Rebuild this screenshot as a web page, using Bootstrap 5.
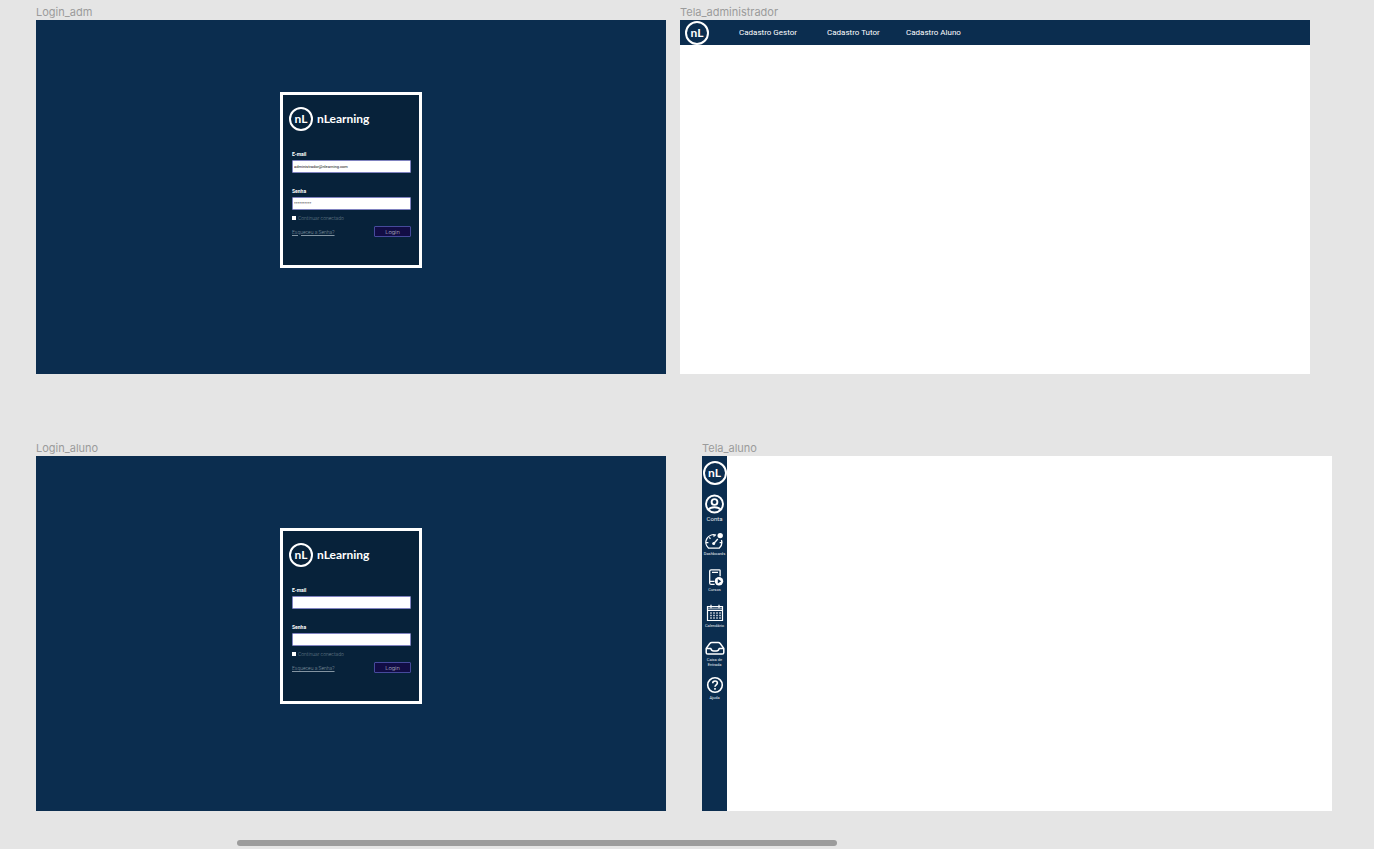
<!DOCTYPE html>
<html lang="pt-BR">
<head>
<meta charset="utf-8">
<meta name="viewport" content="width=device-width, initial-scale=1">
<title>nLearning</title>
<link href="https://cdn.jsdelivr.net/npm/bootstrap@5.3.0/dist/css/bootstrap.min.css" rel="stylesheet">
<style>
  :root { --navy: #0b2d4f; --navy-dark: #07223a; --indigo: #464a9c; }
  body { background: #e5e5e5; font-family: Roboto, "Liberation Sans", sans-serif; font-size: 5px; line-height: 6px; }
  .board-row-a { padding: 0 64px 0 36px; gap: 14px; }
  .board-row-b { padding: 62px 42px 0 36px; gap: 36px; }
  .artboard { flex: 1 1 0; min-width: 0; }
  .artboard-title { font: 400 11px/14px Inter, sans-serif; color: #9b9b9b; margin: 0; padding: 5px 0 1px; }
  .screen { aspect-ratio: 16 / 9; }
  .navy { background: var(--navy); }

  .login-screen { padding-top: 72px; }
  .login-box { width: 142px; min-height: 176px; background: var(--navy-dark); border: 3px solid #fff; padding: 12px 8px 0 9px; }
  .brand-row { margin: 0 0 20px -3px; gap: 4px; }
  .brand-name { font: 700 12px/16px Lato, sans-serif; color: #fff; }
  .ring { width: 24px; height: 24px; border: 2px solid #fff; border-radius: 50%; color: #fff; font: 700 12px/18px Lato, sans-serif; flex: none; }
  .field-name { font-weight: 700; color: #fff; margin-bottom: 3px; display: block; }
  .field { height: 13px; border: 1px solid #8083c0; border-radius: 1px; padding: 0 1px; font-size: 4px; line-height: 10px; color: #111; background: #fff; width: 100%; display: block; }
  .field-group { margin-bottom: 15px; }
  .field-group + .field-group { margin-bottom: 5px; }
  .keep { gap: 2px; color: #6d808f; font-weight: 300; margin-bottom: 5px; }
  .keep input { appearance: none; width: 4px; height: 4px; background: #fff; margin: 0; }
  .forgot { color: #8394a1; font-weight: 300; }
  .login-btn { width: 37px; height: 11px; border: 1px solid var(--indigo); border-radius: 1px; background: #120d45; color: #c3c3d2; font-size: 6px; font-weight: 300; line-height: 8px; padding: 0; }

  .topbar { height: 25px; padding-left: 5px; gap: 30px; }
  .topbar-links { display: grid; grid-template-columns: 88px 79px auto; font-size: 8px; line-height: 12px; }
  .sidebar { width: 25px; padding-top: 5px; flex: none; }
  .side-item { height: 36px; font-size: 4px; line-height: 5px; color: #e6ebf0; text-align: center; }
  .side-item svg { width: 18px; height: 18px; margin-bottom: 1px; flex: none; }
  .side-item.account { margin-top: 10px; height: 37px; font-size: 6px; line-height: 9px; }
  .side-item.account svg { width: 20px; }
  .side-item.inbox svg { width: 20px; height: 16px; }

  .scroll-track { padding: 0 537px 3px 237px; }
  .scroll-thumb { height: 6px; border-radius: 3px; background: #9c9c9c; }
</style>
</head>
<body>
<div class="d-flex flex-column min-vh-100">
  <main>
    <div class="board-row-a d-flex">
      <section class="artboard">
        <h2 class="artboard-title">Login_adm</h2>
        <div class="screen navy login-screen d-flex justify-content-center align-items-start">
          <form class="login-box">
            <div class="brand-row d-flex align-items-center">
              <span class="ring d-flex justify-content-center align-items-center">nL</span>
              <span class="brand-name">nLearning</span>
            </div>
            <div class="field-group">
              <label class="field-name" for="adm-email">E-mail</label>
              <input class="field" id="adm-email" type="text" value="administrador@nlearning.com">
            </div>
            <div class="field-group">
              <label class="field-name" for="adm-senha">Senha</label>
              <input class="field" id="adm-senha" type="text" value="**********">
            </div>
            <div class="keep d-flex align-items-center">
              <input type="checkbox" id="adm-keep"><label for="adm-keep">Continuar conectado</label>
            </div>
            <div class="d-flex justify-content-between align-items-center">
              <a class="forgot" href="#">Esqueceu a Senha?</a>
              <button class="login-btn" type="button">Login</button>
            </div>
          </form>
        </div>
      </section>

      <section class="artboard">
        <h2 class="artboard-title">Tela_administrador</h2>
        <div class="screen bg-white">
          <nav class="topbar navy d-flex align-items-center">
            <span class="ring d-flex justify-content-center align-items-center">nL</span>
            <div class="topbar-links">
              <a class="text-white text-decoration-none" href="#">Cadastro Gestor</a>
              <a class="text-white text-decoration-none" href="#">Cadastro Tutor</a>
              <a class="text-white text-decoration-none" href="#">Cadastro Aluno</a>
            </div>
          </nav>
        </div>
      </section>
    </div>

    <div class="board-row-b d-flex">
      <section class="artboard">
        <h2 class="artboard-title">Login_aluno</h2>
        <div class="screen navy login-screen d-flex justify-content-center align-items-start">
          <form class="login-box">
            <div class="brand-row d-flex align-items-center">
              <span class="ring d-flex justify-content-center align-items-center">nL</span>
              <span class="brand-name">nLearning</span>
            </div>
            <div class="field-group">
              <label class="field-name" for="alu-email">E-mail</label>
              <input class="field" id="alu-email" type="text">
            </div>
            <div class="field-group">
              <label class="field-name" for="alu-senha">Senha</label>
              <input class="field" id="alu-senha" type="password">
            </div>
            <div class="keep d-flex align-items-center">
              <input type="checkbox" id="alu-keep"><label for="alu-keep">Continuar conectado</label>
            </div>
            <div class="d-flex justify-content-between align-items-center">
              <a class="forgot" href="#">Esqueceu a Senha?</a>
              <button class="login-btn" type="button">Login</button>
            </div>
          </form>
        </div>
      </section>

      <section class="artboard">
        <h2 class="artboard-title">Tela_aluno</h2>
        <div class="screen bg-white d-flex">
          <nav class="sidebar navy d-flex flex-column align-items-center">
            <span class="ring d-flex justify-content-center align-items-center">nL</span>
            <a class="side-item account d-flex flex-column align-items-center text-decoration-none" href="#">
              <svg viewBox="-1 0 20 18" overflow="visible" fill="none" stroke="#fff" stroke-width="1.9"><circle cx="8.500" cy="9" r="8.500"/><circle cx="8.500" cy="7" r="2.900"/><path d="M2.700 14.600C4.600 11.400 12.400 11.400 14.300 14.600"/></svg>
              Conta</a>
            <a class="side-item d-flex flex-column align-items-center text-decoration-none" href="#">
              <svg viewBox="0 0 18 18" fill="none" stroke="#fff" stroke-width="1.3"><path d="M11 3.200A7.600 7.600 0 0 0 3.600 16.200H14.200A7.600 7.600 0 0 0 16.400 8M1.400 10.600h2M4.200 5.400l1.300 1.300M9 3v1.800M14.600 10.600h2"/><path d="M9 11.200l3.800-4.200"/><circle cx="8.700" cy="11.400" r="1.500" fill="#fff" stroke="none"/><circle cx="15.200" cy="3.600" r="2.700" fill="#fff" stroke="none"/></svg>
              Dashboards</a>
            <a class="side-item d-flex flex-column align-items-center text-decoration-none" href="#">
              <svg viewBox="0 0 18 18" fill="none" stroke="#fff" stroke-width="1.3"><path d="M8.600 16.400H5.200a1.500 1.500 0 0 1-1.500-1.500V3.200A1.400 1.400 0 0 1 5.100 1.800h8.200a.8.8 0 0 1 .8.800v5.600M6 4.300h6M4 13.400h4.400"/><circle cx="13" cy="13.200" r="4.200" fill="#fff" stroke="none"/><path d="M11.800 11l3.400 2.200-3.400 2.200z" fill="#0b2d4f" stroke="none"/></svg>
              Cursos</a>
            <a class="side-item d-flex flex-column align-items-center text-decoration-none" href="#">
              <svg viewBox="0 0 18 18" fill="none" stroke="#fff" stroke-width="1.2"><path d="M1.500 2.500h15v14h-15zM1.500 6.300h15M5 .8v3.400M13 .8v3.400"/><path d="M1.500 4.200h15" stroke-opacity=".6"/><path d="M5 8.300v6.600M8 8.300v6.600M11 8.300v6.600M14 8.300v6.600" stroke-width="1.300" stroke-dasharray="1.500 1"/></svg>
              Calendário</a>
            <a class="side-item inbox d-flex flex-column align-items-center text-decoration-none" href="#">
              <svg viewBox="-1 1 20 16" overflow="visible" fill="none" stroke="#fff" stroke-width="1.5" stroke-linejoin="round"><path d="M.2 9.400L3.800 4.500Q4.600 3.400 5.800 3.400h6.400q1.200 0 2 1.100l3.600 4.900v4q0 1.600-1.600 1.600H1.800Q.2 15 .2 13.400zM.2 9.400h4.600q.6 2.700 2.800 2.700h2.800q2.200 0 2.800-2.700h4.600"/></svg>
              Caixa de<br>Entrada</a>
            <a class="side-item d-flex flex-column align-items-center text-decoration-none" href="#">
              <svg viewBox="0 0 18 18" fill="none" stroke="#fff" stroke-width="1.6"><circle cx="9" cy="9" r="7.300"/><path d="M6.700 7.300c0-3.200 4.700-3 4.700-.2 0 1.800-2.400 1.800-2.400 3.700"/><path d="M9 12v1.700"/></svg>
              Ajuda</a>
          </nav>
        </div>
      </section>
    </div>
  </main>
  <div class="scroll-track mt-auto"><div class="scroll-thumb"></div></div>
</div>
<script src="https://cdn.jsdelivr.net/npm/bootstrap@5.3.0/dist/js/bootstrap.bundle.min.js"></script>
</body>
</html>
